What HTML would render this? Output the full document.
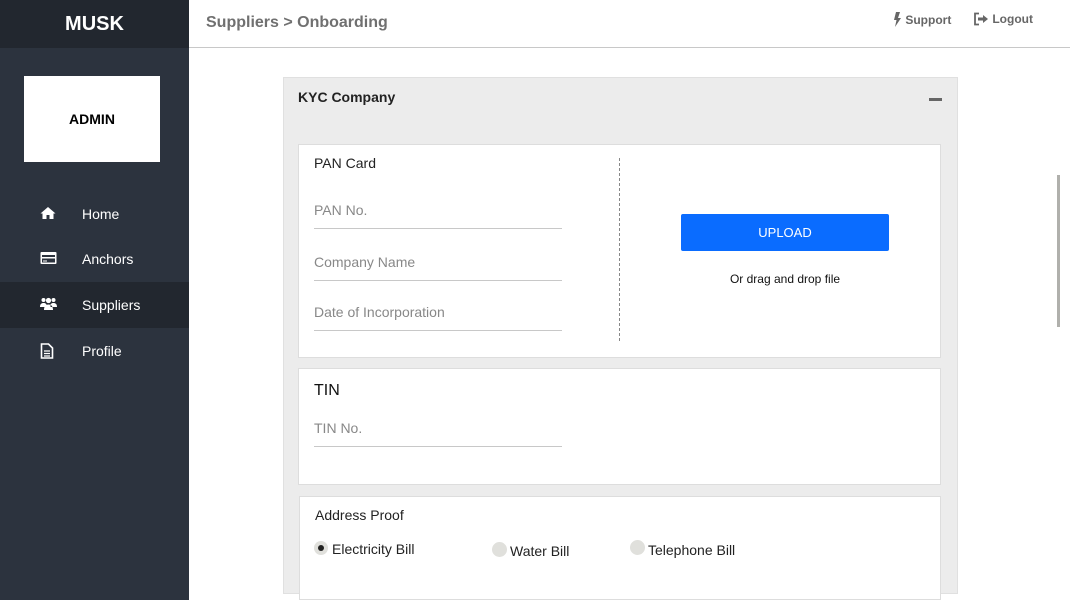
<!DOCTYPE html>
<html><head><meta charset="utf-8"><style>
*{box-sizing:border-box;margin:0;padding:0}
body{width:1070px;height:600px;overflow:hidden;font-family:"Liberation Sans",Arial,sans-serif;background:#fff;position:relative}
.abs{position:absolute}
#side{left:0;top:0;width:189px;height:600px;background:#2c333e}
#logo{left:0;top:0;width:189px;height:48px;background:#22272f;color:#fff;font-weight:bold;font-size:20px;text-align:center;line-height:48px}
#admin{left:24px;top:76px;width:136px;height:86px;background:#fff;font-weight:bold;font-size:14px;text-align:center;line-height:86px;color:#000}
.nav{left:0;width:189px;height:46px;color:#fff;font-size:14px;line-height:46px}
.nav span{position:absolute;left:82px}
.nav svg{position:absolute;left:40px;top:15px}
#hdr{left:189px;top:0;width:881px;height:48px;border-bottom:1px solid #c8c8c8}
.lbl{color:#888;font-size:14px}
.line{height:1px;background:#c8c8c8}
.card{background:#fff;border:1px solid #ddd}
</style></head><body>
<div id="side" class="abs"></div>
<div id="logo" class="abs">MUSK</div>
<div id="admin" class="abs">ADMIN</div>
<div class="abs nav" style="top:191px"><svg width="16" height="14" viewBox="0 0 16 14"><path d="M8 1L0.5 7.5h2V13h4V9h3v4h4V7.5h2z" fill="#fff"/></svg><span>Home</span></div>
<div class="abs nav" style="top:236px"><svg width="17" height="14" viewBox="0 0 17 14"><rect x="0.5" y="1" width="16" height="12" rx="1" fill="#fff"/><rect x="2" y="4" width="13" height="2" fill="#2c333e"/><rect x="2" y="7.5" width="13" height="4" fill="#2c333e"/><rect x="3" y="9.5" width="4" height="1" fill="#fff"/></svg><span>Anchors</span></div>
<div class="abs nav" style="top:282px;background:#22272f"><svg width="17" height="14" viewBox="0 0 17 14"><circle cx="3.5" cy="3" r="2" fill="#fff"/><circle cx="13.5" cy="3" r="2" fill="#fff"/><circle cx="8.5" cy="3.5" r="2.6" fill="#fff"/><path d="M0 10c0-3 1.5-4 3.5-4s3 1 3 2v2zM17 10c0-3-1.5-4-3.5-4s-3 1-3 2v2zM4 13c0-4 2-5.5 4.5-5.5S13 9 13 13z" fill="#fff"/></svg><span>Suppliers</span></div>
<div class="abs nav" style="top:328px"><svg width="14" height="16" viewBox="0 0 14 16"><path d="M1.5 1h7l4 4v10h-11z" fill="none" stroke="#fff" stroke-width="1.6"/><path d="M4 8h6M4 10.5h6M4 13h6" stroke="#fff" stroke-width="1.3"/></svg><span>Profile</span></div>

<div id="hdr" class="abs"></div>
<div class="abs" style="left:206px;top:14px;font-size:16px;font-weight:bold;color:#707070">Suppliers &gt; Onboarding</div>
<div class="abs" style="left:893px;top:12px;font-size:12px;font-weight:bold;color:#666"><svg width="9" height="15" viewBox="0 0 9 15" style="vertical-align:-3px"><path d="M3 0h4L5 6h3l-6 9 1.5-7H1z" fill="#666"/></svg> Support</div>
<div class="abs" style="left:973px;top:12px;font-size:12px;font-weight:bold;color:#666"><svg width="16" height="14" viewBox="0 0 16 14" style="vertical-align:-3px"><path d="M6 1.5H2v11h4" fill="none" stroke="#666" stroke-width="1.8"/><path d="M5 5.5h5V3l5 4-5 4V8.5H5z" fill="#666"/></svg> Logout</div>

<div class="abs" style="left:1057px;top:175px;width:3px;height:152px;background:#b0b0ac"></div>

<div class="abs" style="left:283px;top:77px;width:675px;height:517px;background:#ececec;border:1px solid #e0e0e0"></div>
<div class="abs" style="left:298px;top:89px;font-size:14px;font-weight:bold;color:#222">KYC Company</div>
<div class="abs" style="left:929px;top:98px;width:13px;height:3px;background:#666"></div>

<div class="abs card" style="left:298px;top:144px;width:643px;height:214px"></div>
<div class="abs" style="left:314px;top:155px;font-size:14px;color:#222">PAN Card</div>
<div class="abs lbl" style="left:314px;top:202px">PAN No.</div>
<div class="abs line" style="left:314px;top:228px;width:248px"></div>
<div class="abs lbl" style="left:314px;top:254px">Company Name</div>
<div class="abs line" style="left:314px;top:280px;width:248px"></div>
<div class="abs lbl" style="left:314px;top:304px">Date of Incorporation</div>
<div class="abs line" style="left:314px;top:330px;width:248px"></div>
<div class="abs" style="left:619px;top:158px;height:183px;border-left:1px dashed #888"></div>
<div class="abs" style="left:681px;top:214px;width:208px;height:37px;background:#0a6cff;border-radius:2px;color:#fff;font-size:13px;text-align:center;line-height:38px">UPLOAD</div>
<div class="abs" style="left:681px;top:272px;width:208px;text-align:center;font-size:12px;color:#111">Or drag and drop file</div>

<div class="abs card" style="left:298px;top:368px;width:643px;height:117px"></div>
<div class="abs" style="left:314px;top:382px;font-size:16px;color:#111">TIN</div>
<div class="abs lbl" style="left:314px;top:420px">TIN No.</div>
<div class="abs line" style="left:314px;top:446px;width:248px"></div>

<div class="abs card" style="left:299px;top:496px;width:642px;height:104px"></div>
<div class="abs" style="left:315px;top:507px;font-size:14px;color:#222">Address Proof</div>
<div class="abs" style="left:314px;top:541px;width:14px;height:14px;border-radius:50%;background:#e0e0dc"></div>
<div class="abs" style="left:318px;top:545px;width:6px;height:6px;border-radius:50%;background:#222"></div>
<div class="abs" style="left:332px;top:541px;font-size:14px;color:#222">Electricity Bill</div>
<div class="abs" style="left:492px;top:542px;width:15px;height:15px;border-radius:50%;background:#e0e0dc"></div>
<div class="abs" style="left:510px;top:543px;font-size:14px;color:#222">Water Bill</div>
<div class="abs" style="left:630px;top:540px;width:15px;height:15px;border-radius:50%;background:#e0e0dc"></div>
<div class="abs" style="left:648px;top:542px;font-size:14px;color:#222">Telephone Bill</div>
</body></html>
